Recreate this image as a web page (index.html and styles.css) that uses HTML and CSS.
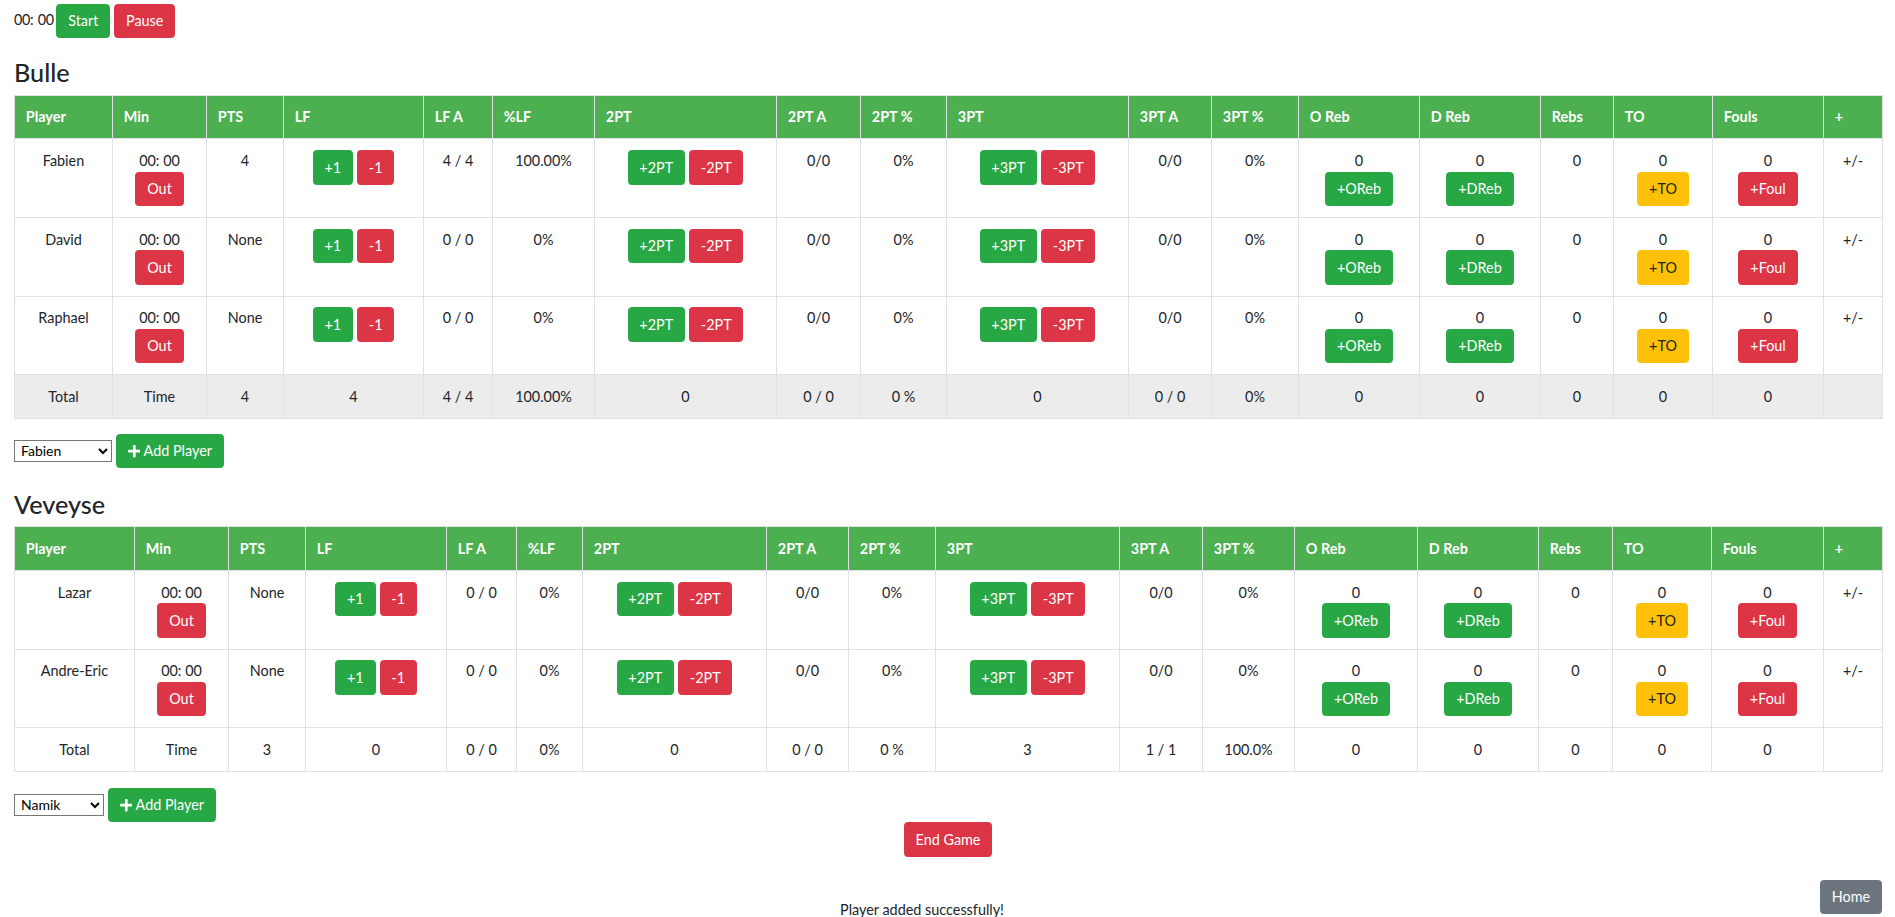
FILE: index.html
```html
<!DOCTYPE html>
<html lang="fr">
<head>
<meta charset="utf-8">
<title>Match</title>
<link rel="stylesheet" href="styles.css">
</head>
<body>
<div class="page">
  <div class="timer-bar">
    <span class="clock">00: 00</span>
    <button class="btn btn-success">Start</button>
    <button class="btn btn-danger">Pause</button>
  </div>

  <h3 class="team team-first">Bulle</h3>
  <table class="stats t1">
    <colgroup>
      <col><col><col><col><col><col><col><col><col><col><col><col><col><col><col><col><col><col>
    </colgroup>
    <thead>
      <tr>
        <th>Player</th><th>Min</th><th>PTS</th><th>LF</th><th>LF A</th><th>%LF</th><th>2PT</th><th>2PT A</th><th>2PT %</th><th>3PT</th><th>3PT A</th><th>3PT %</th><th>O Reb</th><th>D Reb</th><th>Rebs</th><th>TO</th><th>Fouls</th><th>+</th>
      </tr>
    </thead>
    <tbody>
      <tr>
        <td>Fabien</td>
        <td><div>00: 00</div><button class="btn btn-danger btn-block">Out</button></td>
        <td>4</td>
        <td><div class="pair"><button class="btn btn-success">+1</button><button class="btn btn-danger">-1</button></div></td>
        <td>4 / 4</td>
        <td>100.00%</td>
        <td><div class="pair"><button class="btn btn-success">+2PT</button><button class="btn btn-danger">-2PT</button></div></td>
        <td>0/0</td>
        <td>0%</td>
        <td><div class="pair"><button class="btn btn-success">+3PT</button><button class="btn btn-danger">-3PT</button></div></td>
        <td>0/0</td>
        <td>0%</td>
        <td><div>0</div><button class="btn btn-success btn-block">+OReb</button></td>
        <td><div>0</div><button class="btn btn-success btn-block">+DReb</button></td>
        <td>0</td>
        <td><div>0</div><button class="btn btn-warning btn-block">+TO</button></td>
        <td><div>0</div><button class="btn btn-danger btn-block">+Foul</button></td>
        <td>+/-</td>
      </tr>
      <tr>
        <td>David</td>
        <td><div>00: 00</div><button class="btn btn-danger btn-block">Out</button></td>
        <td>None</td>
        <td><div class="pair"><button class="btn btn-success">+1</button><button class="btn btn-danger">-1</button></div></td>
        <td>0 / 0</td>
        <td>0%</td>
        <td><div class="pair"><button class="btn btn-success">+2PT</button><button class="btn btn-danger">-2PT</button></div></td>
        <td>0/0</td>
        <td>0%</td>
        <td><div class="pair"><button class="btn btn-success">+3PT</button><button class="btn btn-danger">-3PT</button></div></td>
        <td>0/0</td>
        <td>0%</td>
        <td><div>0</div><button class="btn btn-success btn-block">+OReb</button></td>
        <td><div>0</div><button class="btn btn-success btn-block">+DReb</button></td>
        <td>0</td>
        <td><div>0</div><button class="btn btn-warning btn-block">+TO</button></td>
        <td><div>0</div><button class="btn btn-danger btn-block">+Foul</button></td>
        <td>+/-</td>
      </tr>
      <tr>
        <td>Raphael</td>
        <td><div>00: 00</div><button class="btn btn-danger btn-block">Out</button></td>
        <td>None</td>
        <td><div class="pair"><button class="btn btn-success">+1</button><button class="btn btn-danger">-1</button></div></td>
        <td>0 / 0</td>
        <td>0%</td>
        <td><div class="pair"><button class="btn btn-success">+2PT</button><button class="btn btn-danger">-2PT</button></div></td>
        <td>0/0</td>
        <td>0%</td>
        <td><div class="pair"><button class="btn btn-success">+3PT</button><button class="btn btn-danger">-3PT</button></div></td>
        <td>0/0</td>
        <td>0%</td>
        <td><div>0</div><button class="btn btn-success btn-block">+OReb</button></td>
        <td><div>0</div><button class="btn btn-success btn-block">+DReb</button></td>
        <td>0</td>
        <td><div>0</div><button class="btn btn-warning btn-block">+TO</button></td>
        <td><div>0</div><button class="btn btn-danger btn-block">+Foul</button></td>
        <td>+/-</td>
      </tr>
      <tr class="total total-hover">
        <td>Total</td><td>Time</td><td>4</td><td>4</td><td>4 / 4</td><td>100.00%</td><td>0</td><td>0 / 0</td><td>0 %</td><td>0</td><td>0 / 0</td><td>0%</td><td>0</td><td>0</td><td>0</td><td>0</td><td>0</td><td></td>
      </tr>
    </tbody>
  </table>

  <div class="add-row">
    <select class="player-select sel-1">
      <option>Fabien</option>
      <option>David</option>
      <option>Raphael</option>
    </select>
    <button class="btn btn-success"><svg class="plus" viewBox="0 0 448 512" aria-hidden="true"><path d="M416 208H272V64c0-17.670-14.330-32-32-32h-32c-17.670 0-32 14.330-32 32v144H32c-17.670 0-32 14.330-32 32v32c0 17.670 14.330 32 32 32h144v144c0 17.670 14.330 32 32 32h32c17.670 0 32-14.330 32-32V304h144c17.670 0 32-14.330 32-32v-32c0-17.670-14.330-32-32-32z"/></svg> Add Player</button>
  </div>

  <h3 class="team team-second">Veveyse</h3>
  <table class="stats t2">
    <colgroup>
      <col><col><col><col><col><col><col><col><col><col><col><col><col><col><col><col><col><col>
    </colgroup>
    <thead>
      <tr>
        <th>Player</th><th>Min</th><th>PTS</th><th>LF</th><th>LF A</th><th>%LF</th><th>2PT</th><th>2PT A</th><th>2PT %</th><th>3PT</th><th>3PT A</th><th>3PT %</th><th>O Reb</th><th>D Reb</th><th>Rebs</th><th>TO</th><th>Fouls</th><th>+</th>
      </tr>
    </thead>
    <tbody>
      <tr>
        <td>Lazar</td>
        <td><div>00: 00</div><button class="btn btn-danger btn-block">Out</button></td>
        <td>None</td>
        <td><div class="pair"><button class="btn btn-success">+1</button><button class="btn btn-danger">-1</button></div></td>
        <td>0 / 0</td>
        <td>0%</td>
        <td><div class="pair"><button class="btn btn-success">+2PT</button><button class="btn btn-danger">-2PT</button></div></td>
        <td>0/0</td>
        <td>0%</td>
        <td><div class="pair"><button class="btn btn-success">+3PT</button><button class="btn btn-danger">-3PT</button></div></td>
        <td>0/0</td>
        <td>0%</td>
        <td><div>0</div><button class="btn btn-success btn-block">+OReb</button></td>
        <td><div>0</div><button class="btn btn-success btn-block">+DReb</button></td>
        <td>0</td>
        <td><div>0</div><button class="btn btn-warning btn-block">+TO</button></td>
        <td><div>0</div><button class="btn btn-danger btn-block">+Foul</button></td>
        <td>+/-</td>
      </tr>
      <tr>
        <td>Andre-Eric</td>
        <td><div>00: 00</div><button class="btn btn-danger btn-block">Out</button></td>
        <td>None</td>
        <td><div class="pair"><button class="btn btn-success">+1</button><button class="btn btn-danger">-1</button></div></td>
        <td>0 / 0</td>
        <td>0%</td>
        <td><div class="pair"><button class="btn btn-success">+2PT</button><button class="btn btn-danger">-2PT</button></div></td>
        <td>0/0</td>
        <td>0%</td>
        <td><div class="pair"><button class="btn btn-success">+3PT</button><button class="btn btn-danger">-3PT</button></div></td>
        <td>0/0</td>
        <td>0%</td>
        <td><div>0</div><button class="btn btn-success btn-block">+OReb</button></td>
        <td><div>0</div><button class="btn btn-success btn-block">+DReb</button></td>
        <td>0</td>
        <td><div>0</div><button class="btn btn-warning btn-block">+TO</button></td>
        <td><div>0</div><button class="btn btn-danger btn-block">+Foul</button></td>
        <td>+/-</td>
      </tr>
      <tr class="total">
        <td>Total</td><td>Time</td><td>3</td><td>0</td><td>0 / 0</td><td>0%</td><td>0</td><td>0 / 0</td><td>0 %</td><td>3</td><td>1 / 1</td><td>100.0%</td><td>0</td><td>0</td><td>0</td><td>0</td><td>0</td><td></td>
      </tr>
    </tbody>
  </table>

  <div class="add-row add-row-second">
    <select class="player-select sel-2">
      <option>Namik</option>
      <option>Lazar</option>
    </select>
    <button class="btn btn-success"><svg class="plus" viewBox="0 0 448 512" aria-hidden="true"><path d="M416 208H272V64c0-17.670-14.330-32-32-32h-32c-17.670 0-32 14.330-32 32v144H32c-17.670 0-32 14.330-32 32v32c0 17.670 14.330 32 32 32h144v144c0 17.670 14.330 32 32 32h32c17.670 0 32-14.330 32-32V304h144c17.670 0 32-14.330 32-32v-32c0-17.670-14.330-32-32-32z"/></svg> Add Player</button>
  </div>

  <div class="end-row">
    <button class="btn btn-danger">End Game</button>
  </div>

  <div class="footer-row">
    <p class="message">Player added successfully!</p>
    <button class="btn btn-secondary">Home</button>
  </div>
</div>
</body>
</html>
```

FILE: styles.css
```css
* { box-sizing: border-box; }

html, body {
  margin: 0;
  padding: 0;
  background: #fff;
}

body {
  font-family: Lato, "Liberation Sans", sans-serif;
  font-size: 14.4px;
  line-height: 21.6px;
  color: #212529;
}

.page {
  padding: 4px 13px 0 14px;
}

.btn {
  display: inline-block;
  font-family: inherit;
  font-size: 14.4px;
  line-height: 21.6px;
  font-weight: 400;
  padding: 5.4px 10.8px;
  border: 1px solid transparent;
  border-radius: 3.6px;
  color: #fff;
  text-align: center;
  vertical-align: middle;
  cursor: pointer;
  white-space: nowrap;
}

.btn-success { background: #28a745; border-color: #28a745; }
.btn-danger { background: #dc3545; border-color: #dc3545; }
.btn-warning { background: #ffc107; border-color: #ffc107; color: #212529; }
.btn-secondary { background: #6c757d; border-color: #6c757d; }

.btn-block {
  display: block;
  margin: 0 auto;
}

.timer-bar {
  display: flex;
  align-items: flex-start;
  gap: 4px;
}

.clock {
  padding-top: 4.5px;
  letter-spacing: -0.3px;
  word-spacing: 1px;
  margin-right: -1.5px;
}

.team {
  font-size: 25.2px;
  line-height: 30.24px;
  font-weight: 500;
  margin: 19px 0 7.2px;
  color: #212529;
}

.team-second {
  margin-top: 21px;
}

.stats {
  width: 100%;
  table-layout: fixed;
  border-collapse: collapse;
  border: 1px solid #dee2e6;
}

.stats th,
.stats td {
  border: 1px solid #dee2e6;
  vertical-align: top;
}

.stats th {
  background: #4caf50;
  color: #fff;
  font-weight: 700;
  text-align: left;
  padding: 10.5px 10.8px;
}

.stats td {
  text-align: center;
  padding: 10.8px 10.8px;
}

.stats .total td {
  padding: 10.5px 10.8px;
}

.stats .total-hover td {
  background: #ececec;
}

.pair {
  display: flex;
  justify-content: center;
  gap: 4px;
}

/* column widths, table 1 (Bulle) */
.t1 col:nth-child(1) { width: 98px; }
.t1 col:nth-child(2) { width: 94px; }
.t1 col:nth-child(3) { width: 77px; }
.t1 col:nth-child(4) { width: 140px; }
.t1 col:nth-child(5) { width: 69px; }
.t1 col:nth-child(6) { width: 102px; }
.t1 col:nth-child(7) { width: 182px; }
.t1 col:nth-child(8) { width: 84px; }
.t1 col:nth-child(9) { width: 86px; }
.t1 col:nth-child(10) { width: 182px; }
.t1 col:nth-child(11) { width: 83px; }
.t1 col:nth-child(12) { width: 87px; }
.t1 col:nth-child(13) { width: 121px; }
.t1 col:nth-child(14) { width: 121px; }
.t1 col:nth-child(15) { width: 73px; }
.t1 col:nth-child(16) { width: 99px; }
.t1 col:nth-child(17) { width: 111px; }
.t1 col:nth-child(18) { width: 59px; }

/* column widths, table 2 (Veveyse) */
.t2 col:nth-child(1) { width: 120px; }
.t2 col:nth-child(2) { width: 94px; }
.t2 col:nth-child(3) { width: 77px; }
.t2 col:nth-child(4) { width: 141px; }
.t2 col:nth-child(5) { width: 70px; }
.t2 col:nth-child(6) { width: 66px; }
.t2 col:nth-child(7) { width: 184px; }
.t2 col:nth-child(8) { width: 82px; }
.t2 col:nth-child(9) { width: 87px; }
.t2 col:nth-child(10) { width: 184px; }
.t2 col:nth-child(11) { width: 83px; }
.t2 col:nth-child(12) { width: 92px; }
.t2 col:nth-child(13) { width: 123px; }
.t2 col:nth-child(14) { width: 121px; }
.t2 col:nth-child(15) { width: 74px; }
.t2 col:nth-child(16) { width: 99px; }
.t2 col:nth-child(17) { width: 112px; }
.t2 col:nth-child(18) { width: 59px; }

.add-row {
  display: flex;
  align-items: center;
  gap: 4px;
  margin-top: 15px;
}

.add-row-second {
  margin-top: 16px;
}

.player-select {
  height: 22px;
  font-family: inherit;
  font-size: 14px;
  color: #000;
  background: #fff;
  border: 1px solid #767676;
  border-radius: 0;
  padding: 0 0 0 2px;
}

.sel-1 { width: 98px; }
.sel-2 { width: 90px; }

.plus {
  width: 12.6px;
  height: 14.4px;
  fill: #fff;
  vertical-align: -2px;
}

.end-row {
  text-align: center;
}

.footer-row {
  display: flex;
  align-items: flex-start;
  margin-top: 23px;
}

.message {
  flex: 1;
  margin: 0;
  padding: 19px 0 0 10px;
  text-align: center;
}
```
